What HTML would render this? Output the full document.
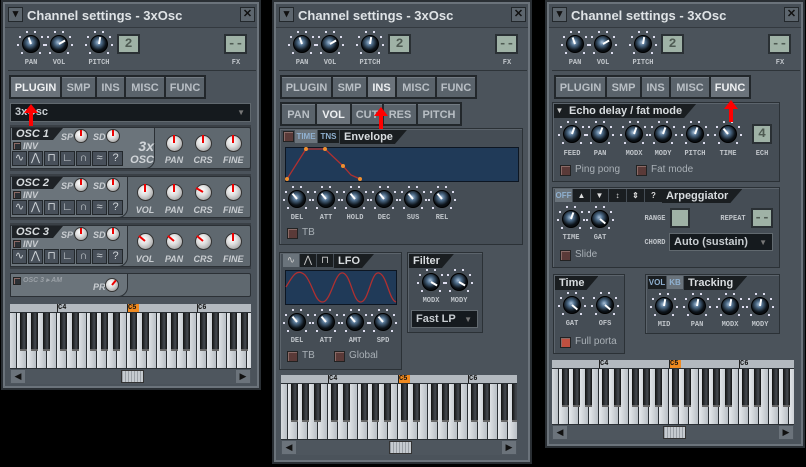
<!DOCTYPE html>
<html><head><meta charset="utf-8">
<style>
*{box-sizing:border-box;margin:0;padding:0}
body{width:806px;height:467px;background:#000;position:relative;overflow:hidden;font-family:"Liberation Sans",sans-serif}
.a{position:absolute}
.panel{position:absolute;background:#4b535b;border:2px solid #6b737b;outline:2px solid #2a2f34}
.title{position:absolute;left:0;right:0;top:0;height:24px;background:#474f57;border-bottom:1px solid #33393f;color:#dfe3e6;font-weight:bold;font-size:13px;line-height:24px;padding-left:22px}
.btn{position:absolute;width:15px;height:15px;background:#5d666e;border:1px solid #23282c;color:#111;font-size:11px;line-height:13px;text-align:center;font-weight:bold}
.tabs{position:absolute;display:flex;background:#22272b;border:1px solid #22272b;gap:2px;padding:1px}
.tab{background:#5a636b;color:#b9bfc5;font-weight:bold;font-size:11px;height:20px;line-height:20px;text-align:center;border-top:1px solid #737b83}
.tab.s{background:#6b737b;color:#eef0f2}
.box{position:absolute;background:#454d55;border:1px solid #2b3136;box-shadow:inset 1px 1px 0 #5c646c}
.hd{position:absolute;left:2px;top:2px;height:14px;background:#1a1e21;color:#d8dcdf;font-weight:bold;font-size:11px;line-height:14px;padding:0 14px 0 4px;clip-path:polygon(0 0,100% 0,calc(100% - 12px) 100%,0 100%)}
.lbl{position:absolute;font-size:7px;color:#c0c5ca;font-family:"Liberation Mono",monospace;font-weight:bold;text-align:center;width:30px}
.lcd{position:absolute;background:#9fb2a6;border:2px solid #2a3034;color:#4e5a52;font-family:"Liberation Mono",monospace;font-weight:bold;font-size:13px;text-align:center;line-height:16px}
.chk{position:absolute;width:11px;height:11px;background:#5a3a38;border:1px solid #222;box-shadow:inset 1px 1px 0 #8a6a66}
.ct{position:absolute;font-size:10px;color:#a9b0b6}
.dk{position:absolute;border-radius:50%;background:radial-gradient(circle at 45% 40%,#a8c0d8 0,#4d6b88 25%,#0c1218 60%,#000 100%);border:1px solid #000}
.wk{position:absolute;border-radius:50%;background:radial-gradient(circle at 40% 35%,#fff 0,#ddd 40%,#888 100%);border:1px solid #333}
.ind{position:absolute;left:50%;top:50%;width:2px;margin-left:-1px;transform-origin:50% 0}
.osc{position:absolute;background:#5f686f;border:1px solid #2b3035;border-radius:2px}
.oh{position:absolute;left:2px;top:1px;background:#1e2226;color:#d7dbde;font-style:italic;font-weight:bold;font-size:11px;height:12px;line-height:12px;padding:0 14px 0 4px;clip-path:polygon(0 0,100% 0,calc(100% - 10px) 100%,0 100%)}
.wv{position:absolute;width:22px;height:18px;background:#48505a;border:1px solid #23282c;color:#cfd4d8;font-size:11px;text-align:center;line-height:16px}
.pl{font-style:italic;font-weight:bold;font-size:9px;color:#c9cdd1;position:absolute}
.dd{position:absolute;background:#151a1e;border:1px solid #61696f;color:#c8cdd1;font-weight:bold;font-size:11px;line-height:17px;padding-left:4px}
.arrow{position:absolute;width:0;height:0;border-left:7px solid transparent;border-right:7px solid transparent;border-bottom:9px solid #f00}
.arrow::after{content:"";position:absolute;left:-2px;top:8px;width:4px;height:14px;background:#f00}
</style></head><body>

<div class="panel" style="left:3px;top:2px;width:256px;height:386px">
 <div class="title">Channel settings - 3xOsc</div>
</div>
<div class="panel" style="left:274px;top:2px;width:256px;height:460px">
 <div class="title">Channel settings - 3xOsc</div>
</div>
<div class="panel" style="left:547px;top:2px;width:256px;height:444px">
 <div class="title">Channel settings - 3xOsc</div>
</div>

<div id="c"></div>

<script>
var H='';
function A(s){H+=s}
function dk(x,y,ang,d){d=d||18;A('<div class="dk" style="left:'+(x-d/2)+'px;top:'+(y-d/2)+'px;width:'+d+'px;height:'+d+'px"><div class="ind" style="height:'+(d/2-2)+'px;background:#fff;transform:rotate('+(180+ang)+'deg)"></div></div>');
 for(var i=0;i<8;i++){var t=(-135+i*38.6)*Math.PI/180,r=d/2+4;A('<div class="a" style="left:'+(x+Math.sin(t)*r-1)+'px;top:'+(y-Math.cos(t)*r-1)+'px;width:2px;height:2px;background:#dde"></div>')}}
function wk(x,y,ang,d){d=d||17;A('<div class="wk" style="left:'+(x-d/2)+'px;top:'+(y-d/2)+'px;width:'+d+'px;height:'+d+'px"><div class="ind" style="height:'+(d/2-1)+'px;background:#e00;transform:rotate('+(180+ang)+'deg)"></div></div>')}
function lb(x,y,t){A('<div class="lbl" style="left:'+(x-15)+'px;top:'+y+'px">'+t+'</div>')}
function tabs(x,y,list,w,sel){A('<div class="tabs" style="left:'+x+'px;top:'+y+'px">');list.forEach(function(t,i){A('<div class="tab'+(i==sel?' s':'')+'" style="width:'+w[i]+'px">'+t+'</div>')});A('</div>')}
function hdr(px){
 A('<div class="btn" style="left:'+(px+5)+'px;top:7px">&#9662;</div>');
 A('<div class="btn" style="left:'+(px+237)+'px;top:7px">&#10005;</div>');
 dk(px+28,44,-20);dk(px+56,44,60);dk(px+96,44,10);
 lb(px+28,59,'PAN');lb(px+56,59,'VOL');lb(px+96,59,'PITCH');
 A('<div class="lcd" style="left:'+(px+114)+'px;top:34px;width:23px;height:20px">2</div>');
 A('<div class="lcd" style="left:'+(px+221)+'px;top:34px;width:23px;height:20px">--</div>');
 lb(px+233,59,'FX');
 A('<div class="a" style="left:'+(px+5)+'px;top:70px;width:248px;height:1px;background:#2e3439"></div>');
}
function piano(x,y,w){
 A('<div class="a" style="left:'+x+'px;top:'+y+'px;width:'+w+'px;height:80px;background:#2a2f34;overflow:hidden">');
 A('<div class="a" style="left:0;top:0;width:'+w+'px;height:8px;background:#b3b9bf"></div>');
 var off=47;
 for(var k=-10;k<30;k++){var kx=off+k*10;if(kx>w)break;A('<div class="a" style="left:'+kx+'px;top:9px;width:9px;height:55px;background:linear-gradient(90deg,#e6e9ec,#b9bfc5)"></div>')}
 var bo=[6,18,36,47.5,59];for(var o=-1;o<4;o++)bo.forEach(function(b){var bx=off+o*70+b-3.5;if(bx<w&&bx>-7)A('<div class="a" style="left:'+bx+'px;top:9px;width:7px;height:38px;background:linear-gradient(90deg,#111,#454a50 60%,#111);border-bottom:2px solid #666"></div>')});
 [['C4',off],['C5',off+70],['C6',off+140]].forEach(function(c,i){A('<div class="a" style="left:'+c[1]+'px;top:0;width:'+(i==1?12:14)+'px;height:8px;background:'+(i==1?'#f08a20':'#b3b9bf')+';border-left:1px solid #222;font-family:Liberation Mono,monospace;font-weight:bold;font-size:7px;color:#111;line-height:8px">'+c[0]+'</div>')});
 A('<div class="a" style="left:0;top:65px;width:'+w+'px;height:15px;background:#4e565e"></div>');
 A('<div class="a" style="left:1px;top:66px;width:14px;height:13px;background:#6b737b;color:#111;font-size:9px;line-height:13px;text-align:center">&#9664;</div>');
 A('<div class="a" style="left:'+(w-15)+'px;top:66px;width:14px;height:13px;background:#6b737b;color:#111;font-size:9px;line-height:13px;text-align:center">&#9654;</div>');
 A('<div class="a" style="left:'+(w/2-10)+'px;top:66px;width:23px;height:13px;background:repeating-linear-gradient(90deg,#9aa0a6 0 1px,#c6cbd0 1px 3px);border:1px solid #333"></div>');
 A('</div>');
}
var TW=[49,33,27,38,38];
// Panel 1
hdr(3);
tabs(9,75,['PLUGIN','SMP','INS','MISC','FUNC'],TW,0);
A('<div class="dd" style="left:10px;top:103px;width:241px;height:19px">3xOsc<span style="position:absolute;right:5px;color:#777;font-size:8px">&#9660;</span></div>');
function osc(y,n,big){
 A('<div class="a" style="left:10px;top:'+(y-2)+'px;width:241px;height:46px;background:#3a4046"></div>');
 A('<div class="osc" style="left:10px;top:'+y+'px;width:241px;height:42px"></div>');
 A('<div class="a" style="left:10px;top:'+y+'px;width:'+(big?145:118)+'px;height:42px;background:#6b747b;border-radius:0 0 10px 0;border:1px solid #2b3035"></div>');
 A('<div class="oh" style="top:'+(y+1)+'px;left:12px">OSC '+n+'</div>');
 A('<div class="pl" style="left:61px;top:'+(y+5)+'px">SP</div>');wk(81,y+9,0,14);
 A('<div class="pl" style="left:93px;top:'+(y+5)+'px">SD</div>');wk(113,y+9,0,14);
 A('<div class="chk" style="left:13px;top:'+(y+15)+'px;width:8px;height:8px;background:#2a2f34"></div><div class="pl" style="left:23px;top:'+(y+14)+'px">INV</div>');
 ['&#8767;','&#8896;','&#8851;','&#8735;','&#8745;','&#8776;','?'].forEach(function(s,i){A('<div class="wv" style="left:'+(12+i*16)+'px;top:'+(y+24)+'px;width:15px;height:15px;line-height:13px">'+s+'</div>')});
}
osc(127,1,true);osc(176,2);osc(225,3);
A('<div style="position:absolute;left:128px;top:140px;color:#d0d4d8;font-style:italic;font-weight:bold;font-size:14px;line-height:12px;text-align:right;width:26px">3x<br><span style="font-size:11px">OSC</span></div>');
wk(174,143,0);wk(203,143,0);wk(233,143,0);
[['PAN',174],['CRS',203],['FINE',233]].forEach(function(l){A('<div class="pl" style="left:'+(l[1]-10)+'px;top:155px;width:20px;text-align:center">'+l[0]+'</div>')});
[176,225].forEach(function(y,j){var xs=[145,174,203,233];xs.forEach(function(x,i){wk(x,y+16,j==0&&i==2?-60:(j==1&&i<3?-50:0))});['VOL','PAN','CRS','FINE'].forEach(function(l,i){A('<div class="pl" style="left:'+(xs[i]-10)+'px;top:'+(y+29)+'px;width:20px;text-align:center">'+l+'</div>')})});
A('<div class="osc" style="left:10px;top:273px;width:241px;height:24px"></div>');
A('<div class="a" style="left:10px;top:273px;width:118px;height:24px;background:#6b747b;border-radius:0 0 10px 0;border:1px solid #2b3035"></div>');
A('<div class="chk" style="left:13px;top:277px;width:8px;height:8px;background:#2a2f34"></div><div class="pl" style="left:23px;top:276px;color:#9aa0a6;font-size:7px">OSC 3 &#9656; AM</div>');
A('<div class="pl" style="left:93px;top:282px">PR</div>');wk(112,285,40,14);
piano(10,304,241);
// Panel 2
hdr(274);
tabs(280,75,['PLUGIN','SMP','INS','MISC','FUNC'],TW,2);
tabs(280,102,['PAN','VOL','CUT','RES','PITCH'],[33,33,30,32,42],1);
A('<div class="box" style="left:279px;top:128px;width:244px;height:117px"></div>');
A('<div class="chk" style="left:283px;top:131px"></div><div class="a" style="left:295px;top:130px;width:22px;height:13px;background:#6a737b;color:#8fb0d0;font-weight:bold;font-size:8px;line-height:13px;text-align:center">TIME</div><div class="a" style="left:318px;top:130px;width:21px;height:13px;background:#1a1e21;color:#8fb0d0;font-weight:bold;font-size:8px;line-height:13px;text-align:center">TNS</div>');
A('<div class="hd" style="left:340px;top:130px">Envelope</div>');
A('<svg class="a" style="left:285px;top:147px" width="234" height="35"><rect x="0.5" y="0.5" width="233" height="34" fill="#203a58" stroke="#0d1622"/><polyline points="2,32 21,2 40,2 58,19 66,28 75,32" fill="none" stroke="#b03030" stroke-width="1.3"/><g fill="#f09030"><circle cx="2" cy="32" r="2"/><circle cx="21" cy="2" r="2"/><circle cx="40" cy="2" r="2"/><circle cx="58" cy="19" r="2"/><circle cx="75" cy="32" r="2"/></g></svg>');
var ex=[297,326,355,384,413,442];['DEL','ATT','HOLD','DEC','SUS','REL'].forEach(function(l,i){dk(ex[i],199,-40);lb(ex[i],214,l)});
A('<div class="chk" style="left:287px;top:228px"></div><div class="ct" style="left:302px;top:227px">TB</div>');
A('<div class="box" style="left:279px;top:252px;width:123px;height:118px"></div>');
['&#8767;','&#8896;','&#8851;'].forEach(function(s,i){A('<div class="a" style="left:'+(283+i*17)+'px;top:254px;width:16px;height:13px;background:'+(i==0?'#6a737b':'#1a1e21')+';color:#ccc;font-size:10px;line-height:13px;text-align:center">'+s+'</div>')});
A('<div class="hd" style="left:334px;top:254px">LFO</div>');
A('<svg class="a" style="left:285px;top:270px" width="112" height="35"><rect x="0.5" y="0.5" width="111" height="34" fill="#203a58" stroke="#0d1622"/><path d="M1,17 C8,5 12,-2 20,5 C28,14 30,33 38,32 C46,31 50,1 58,3 C66,5 68,33 76,32 C84,31 86,1 94,3 C102,5 104,30 111,32" fill="none" stroke="#b03030" stroke-width="1.3"/></svg>');
[297,326,355,383].forEach(function(x,i){dk(x,322,-40);lb(x,337,['DEL','ATT','AMT','SPD'][i])});
A('<div class="chk" style="left:287px;top:351px"></div><div class="ct" style="left:302px;top:350px">TB</div><div class="chk" style="left:334px;top:351px"></div><div class="ct" style="left:349px;top:350px">Global</div>');
A('<div class="box" style="left:407px;top:252px;width:76px;height:81px"></div><div class="hd" style="left:409px;top:254px">Filter</div>');
dk(431,282,120);dk(459,282,120);lb(431,297,'MODX');lb(459,297,'MODY');
A('<div class="dd" style="left:411px;top:310px;width:67px;height:18px">Fast LP<span style="position:absolute;right:5px;color:#777;font-size:8px">&#9660;</span></div>');
piano(281,375,236);
// Panel 3
hdr(547);
tabs(554,75,['PLUGIN','SMP','INS','MISC','FUNC'],TW,4);
A('<div class="box" style="left:552px;top:102px;width:228px;height:80px"></div>');
A('<div class="a" style="left:554px;top:104px;width:11px;height:14px;background:#1a1e21;color:#ccc;font-size:8px;line-height:14px;text-align:center">&#9660;</div><div class="hd" style="left:565px;top:104px">Echo delay / fat mode</div>');
var fx=[572,600,634,663,695,728];['FEED','PAN','MODX','MODY','PITCH','TIME'].forEach(function(l,i){dk(fx[i],134,i==5?-40:20);lb(fx[i],150,l)});
A('<div class="lcd" style="left:752px;top:124px;width:20px;height:20px">4</div>');lb(762,150,'ECH');
A('<div class="chk" style="left:560px;top:165px"></div><div class="ct" style="left:575px;top:164px">Ping pong</div><div class="chk" style="left:636px;top:165px"></div><div class="ct" style="left:651px;top:164px">Fat mode</div>');
A('<div class="box" style="left:552px;top:187px;width:228px;height:81px"></div>');
['OFF','&#9650;','&#9660;','&#8597;','&#8661;','?'].forEach(function(s,i){A('<div class="a" style="left:'+(555+i*18)+'px;top:189px;width:17px;height:13px;background:'+(i==0?'#6a737b':'#1a1e21')+';color:'+(i==0?'#8fb0d0':'#ddd')+';font-weight:bold;font-size:8px;line-height:13px;text-align:center">'+s+'</div>')});
A('<div class="hd" style="left:662px;top:189px">Arpeggiator</div>');
dk(571,219,20);dk(600,219,130);lb(571,234,'TIME');lb(600,234,'GAT');
A('<div class="lbl" style="left:643px;top:215px;width:24px">RANGE</div><div class="lcd" style="left:670px;top:208px;width:20px;height:20px"></div><div class="lbl" style="left:718px;top:215px;width:30px">REPEAT</div><div class="lcd" style="left:751px;top:208px;width:22px;height:20px">--</div>');
A('<div class="lbl" style="left:643px;top:239px;width:24px">CHORD</div><div class="dd" style="left:669px;top:233px;width:104px;height:18px">Auto (sustain)<span style="position:absolute;right:5px;color:#777;font-size:8px">&#9660;</span></div>');
A('<div class="chk" style="left:560px;top:250px"></div><div class="ct" style="left:575px;top:249px">Slide</div>');
A('<div class="box" style="left:553px;top:274px;width:72px;height:80px"></div><div class="hd" style="left:555px;top:276px">Time</div>');
dk(572,305,130);dk(605,305,130);lb(572,320,'GAT');lb(605,320,'OFS');
A('<div class="chk" style="left:560px;top:337px;background:#c05040"></div><div class="ct" style="left:575px;top:336px">Full porta</div>');
A('<div class="box" style="left:645px;top:274px;width:135px;height:60px"></div>');
A('<div class="a" style="left:648px;top:276px;width:18px;height:13px;background:#1a1e21;color:#8fb0d0;font-weight:bold;font-size:8px;line-height:13px;text-align:center">VOL</div><div class="a" style="left:667px;top:276px;width:16px;height:13px;background:#6a737b;color:#8fb0d0;font-weight:bold;font-size:8px;line-height:13px;text-align:center">KB</div><div class="hd" style="left:684px;top:276px">Tracking</div>');
[664,697,730,760].forEach(function(x,i){dk(x,306,10);lb(x,321,['MID','PAN','MODX','MODY'][i])});
piano(552,360,242);
A('<div class="arrow" style="left:24px;top:104px"></div><div class="arrow" style="left:374px;top:107px"></div><div class="arrow" style="left:724px;top:100px"></div>');
document.getElementById('c').innerHTML=H;
</script>
</body></html>
